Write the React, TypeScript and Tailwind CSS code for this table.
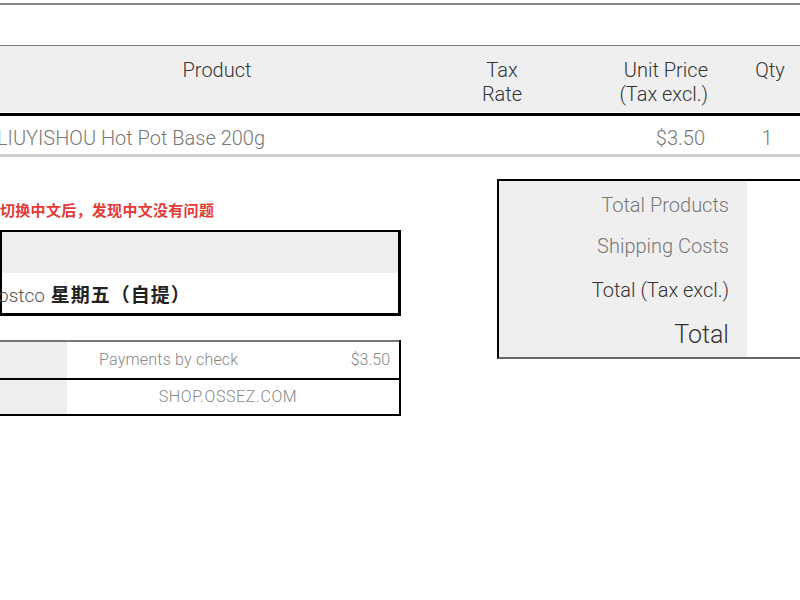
import React from "react";

const font = { fontFamily: "Roboto, 'Noto Sans CJK SC', sans-serif" };

function HeaderRow() {
  return (
    <div className="border-t border-[#777]">
      <div className="flex h-[66px] bg-[#efefef] text-[20px] leading-[24px] text-[#333] font-light">
        <div className="flex w-[434px] items-start justify-center pt-[12px]">Product</div>
        <div className="flex w-[136px] flex-col items-center pt-[12px]">
          <span>Tax</span>
          <span>Rate</span>
        </div>
        <div className="flex w-[175px] flex-col items-end pr-[37px] pt-[12px]">
          <span>Unit Price</span>
          <span>(Tax excl.)</span>
        </div>
        <div className="flex w-[50px] justify-center pt-[12px]">Qty</div>
      </div>
      <div className="h-px bg-white" />
      <div className="h-[3px] bg-black" />
    </div>
  );
}

function ProductRow() {
  return (
    <div className="flex h-[41px] items-center pt-[6px] border-b-[3px] border-[#cfcfcf] text-[20px] font-light text-[#777]">
      <div className="w-[434px] -ml-[3px] whitespace-nowrap">LIUYISHOU Hot Pot Base 200g</div>
      <div className="w-[136px]" />
      <div className="w-[175px] pr-[37px] text-right">$3.50</div>
      <div className="w-[50px] text-center">1</div>
    </div>
  );
}

function CarrierBox() {
  return (
    <div className="border-2 border-r-[3px] border-b-[3px] border-black">
      <div className="h-[41px] bg-[#efefef]" />
      <div className="flex h-[40px] items-center pt-[7px] whitespace-nowrap text-[19px] font-light text-[#555]">
        <span className="-ml-[4px]">ostco</span>
        <span className="ml-[6px] text-[19px] font-bold tracking-[1px] text-[#222]">星期五（自提）</span>
      </div>
    </div>
  );
}

function PaymentBox() {
  return (
    <div className="border-r-2 border-black">
      <div className="flex h-[38px] border-t-2 border-[#777] text-[16px] font-light text-[#888]">
        <div className="w-[67px] bg-[#efefef]" />
        <div className="flex flex-1 items-center justify-between pl-[32px] pr-[9px]">
          <span className="tracking-[0.2px]">Payments by check</span>
          <span>$3.50</span>
        </div>
      </div>
      <div className="flex h-[38px] border-y-2 border-black text-[16px] font-light text-[#888]">
        <div className="w-[67px] bg-[#efefef]" />
        <div className="flex flex-1 items-center justify-center pr-[10px] tracking-[0.6px]">SHOP.OSSEZ.COM</div>
      </div>
    </div>
  );
}

function TotalsBox() {
  const rows = [
    { label: "Total Products", cls: "h-[41px] text-[#777] text-[20px]" },
    { label: "Shipping Costs", cls: "h-[42px] text-[#777] text-[20px]" },
    { label: "Total (Tax excl.)", cls: "h-[45px] text-[#333] text-[20px]" },
    { label: "Total", cls: "h-[45px] text-[#333] text-[25px]" },
  ];
  return (
    <div className="flex border-t-2 border-l-2 border-b-2 border-t-black border-l-black border-b-[#666]">
      <div className="flex w-[248px] flex-col bg-[#efefef] pt-[3px] pr-[18px] font-light">
        {rows.map((r) => (
          <div key={r.label} className={`flex items-center justify-end ${r.cls}`}>
            {r.label}
          </div>
        ))}
      </div>
      <div className="flex-1 bg-white" />
    </div>
  );
}

export default function App() {
  return (
    <div className="h-[600px] w-[800px] overflow-hidden bg-white" style={font}>
      <div className="mt-[3px] h-[2px] bg-[#888]" />
      <div className="mt-[40px]">
        <HeaderRow />
        <ProductRow />
      </div>
      <div className="mt-[22px] flex">
        <div className="w-[401px] pt-[22px]">
          <p className="mb-[9px] text-[15px] font-bold leading-[20px] tracking-[0.3px] text-[#e53935]">
            切换中文后，发现中文没有问题
          </p>
          <CarrierBox />
          <div className="mt-[24px]">
            <PaymentBox />
          </div>
        </div>
        <div className="ml-[96px] flex-1">
          <TotalsBox />
        </div>
      </div>
    </div>
  );
}
